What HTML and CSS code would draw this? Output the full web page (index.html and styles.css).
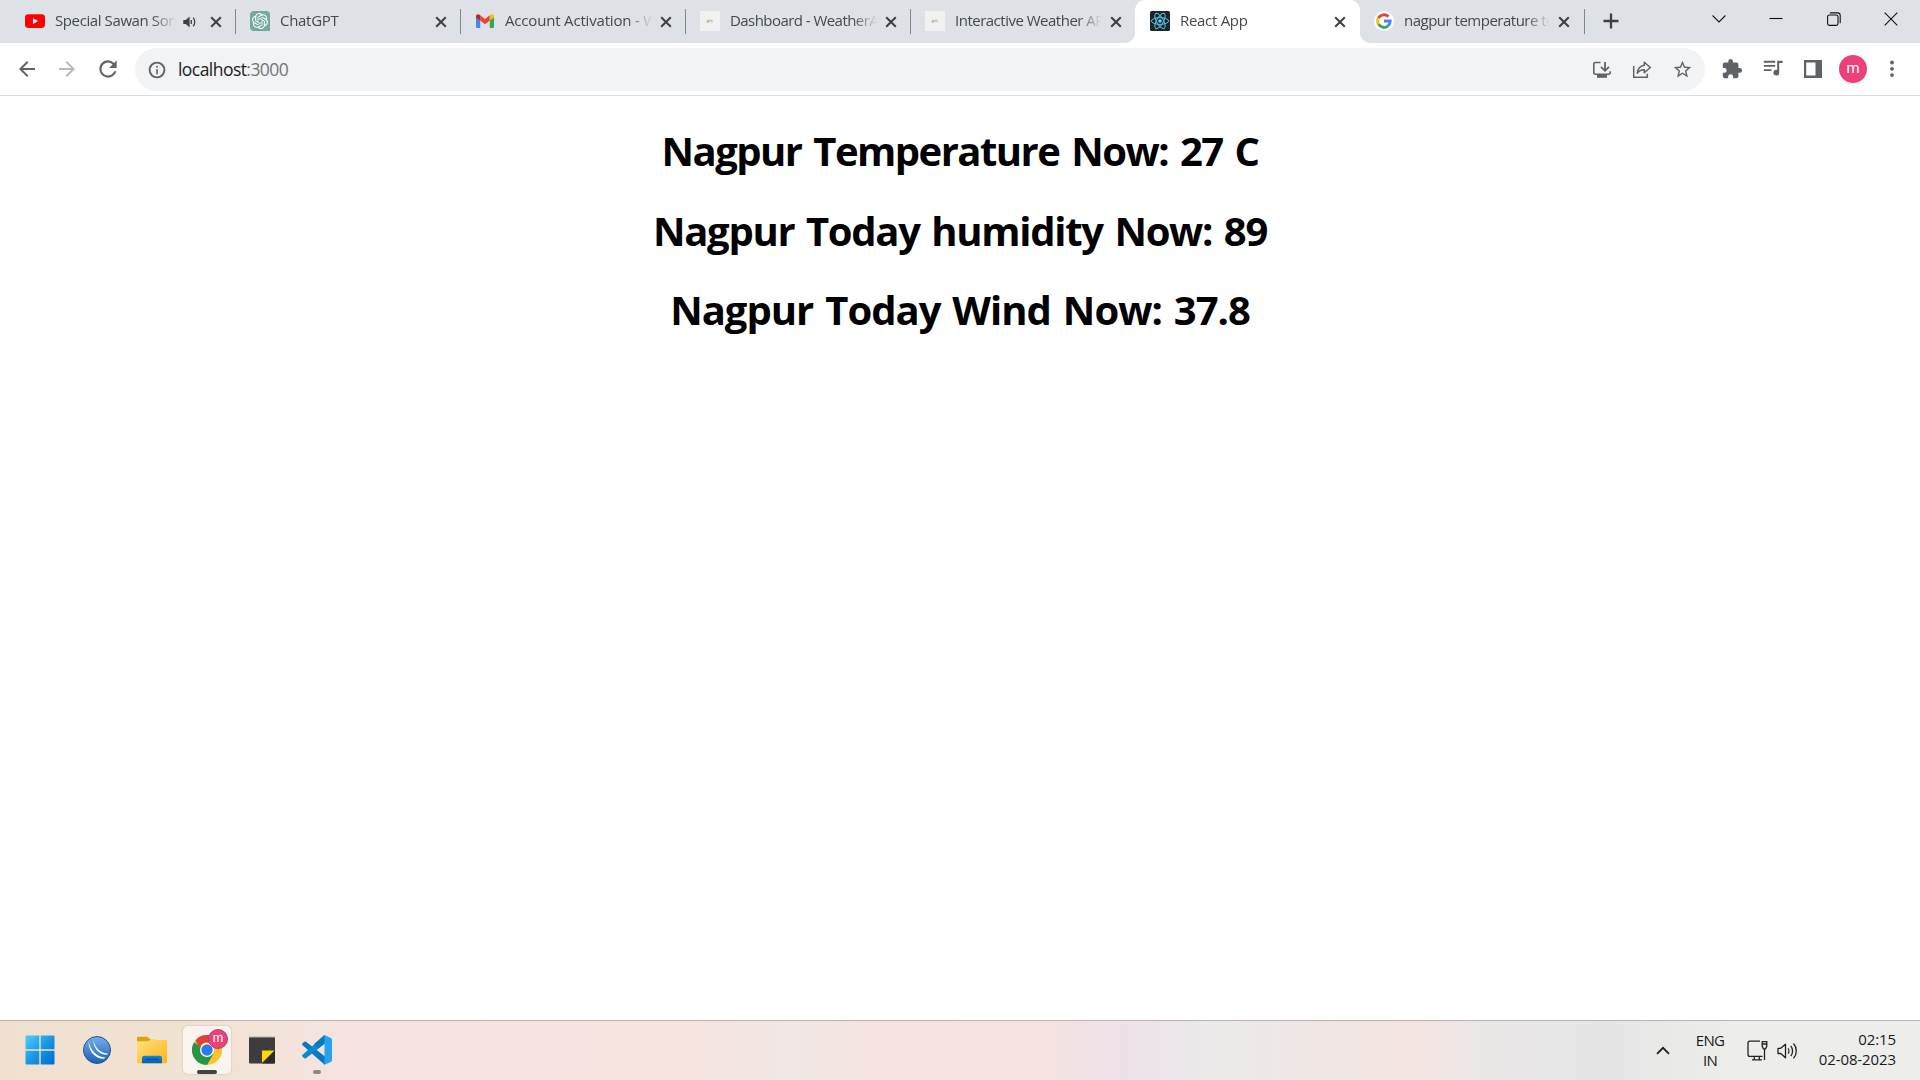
FILE: index.html
```html
<!DOCTYPE html>
<html lang="en">
<head>
<meta charset="utf-8">
<title>React App</title>
<link rel="stylesheet" href="styles.css">
</head>
<body>
<svg class="defs" width="0" height="0">
  <symbol id="close" viewBox="0 0 12 12"><path d="M1.2 1.2l9.6 9.6M10.8 1.2l-9.6 9.6" fill="none" stroke="#3c4043" stroke-width="2"/></symbol>
  <symbol id="weather" viewBox="0 0 20 20"><rect width="20" height="20" fill="#f1f1f0"/><circle cx="7.8" cy="10.6" r="1.2" fill="#a5c957"/><path d="M7 9.3h5.5" stroke="#b9b9a8" stroke-width="1"/><path d="M9.3 10.8h3.7" stroke="#c5c8d0" stroke-width="1"/></symbol>
</svg>

<header class="tabstrip">
  <div class="tab">
    <svg class="favicon" viewBox="0 0 20 20"><rect y="3.2" width="20" height="13.8" rx="3.4" fill="#f00"/><path d="M8 7.2v5.8l5-2.9z" fill="#fff"/></svg>
    <span class="title title-audio">Special Sawan Song</span>
    <svg class="audio" width="13" height="12" viewBox="0 0 13 12"><path d="M.3 4v4h2.5L6.6 11.6V.4L2.8 4z" fill="#3c4043"/><path d="M8.3 4v4" stroke="#3c4043" stroke-width="1.3"/><path d="M10 1.8c2 1.800 2 6.600 0 8.400" transform="translate(.2)" fill="none" stroke="#3c4043" stroke-width="1.300"/></svg>
    <svg class="close"><use href="#close"/></svg>
  </div>
  <div class="tab">
    <svg class="favicon" viewBox="0 0 20 20"><path d="M4 0h12a4 4 0 0 1 4 4v16H4a4 4 0 0 1-4-4V4a4 4 0 0 1 4-4z" fill="#74aa9c"/><g transform="translate(2 2) scale(.667)"><path fill="#fff" d="M22.28 9.82a5.98 5.98 0 0 0-.52-4.91 6.05 6.05 0 0 0-6.51-2.9A6.07 6.07 0 0 0 4.98 4.18a5.98 5.98 0 0 0-4 2.9 6.05 6.05 0 0 0 .74 7.1 5.98 5.98 0 0 0 .51 4.91 6.05 6.05 0 0 0 6.52 2.9A5.98 5.98 0 0 0 13.26 24a6.06 6.06 0 0 0 5.77-4.21 5.99 5.99 0 0 0 4-2.9 6.06 6.06 0 0 0-.75-7.07zm-9.02 12.61a4.48 4.48 0 0 1-2.88-1.04l.14-.08 4.78-2.76a.8.8 0 0 0 .39-.68v-6.74l2.02 1.17a.07.07 0 0 1 .04.05v5.58a4.5 4.5 0 0 1-4.49 4.5zM3.6 18.3a4.47 4.47 0 0 1-.54-3.01l.14.09 4.78 2.76a.77.77 0 0 0 .78 0l5.84-3.37v2.33a.08.08 0 0 1-.03.06L9.74 19.95a4.5 4.5 0 0 1-6.14-1.65zM2.34 7.9a4.49 4.49 0 0 1 2.37-1.98v5.68a.77.77 0 0 0 .39.68l5.81 3.35-2.02 1.17a.08.08 0 0 1-.07 0l-4.83-2.79A4.5 4.5 0 0 1 2.34 7.87zm16.6 3.86l-5.84-3.39L15.12 7.2a.08.08 0 0 1 .07 0l4.83 2.79a4.49 4.49 0 0 1-.68 8.1v-5.68a.79.79 0 0 0-.4-.66zm2.01-3.02l-.14-.09-4.77-2.78a.78.78 0 0 0-.79 0L9.41 9.23V6.9a.07.07 0 0 1 .03-.06l4.83-2.79a4.5 4.5 0 0 1 6.68 4.66zM8.31 12.86l-2.02-1.16a.08.08 0 0 1-.04-.06V6.07a4.5 4.5 0 0 1 7.38-3.45l-.14.08-4.78 2.76a.8.8 0 0 0-.39.68zm1.1-2.36l2.6-1.5 2.61 1.5v3l-2.6 1.5-2.61-1.5z"/></g></svg>
    <span class="title">ChatGPT</span>
    <svg class="close"><use href="#close"/></svg>
  </div>
  <div class="tab">
    <svg class="favicon" viewBox="0 0 20 20"><path d="M1 5v10.700A1.300 1.300 0 0 0 2.300 17H5.200V8.300z" fill="#4285f4"/><path d="M19 5v10.700a1.300 1.300 0 0 1-1.300 1.300H14.800V8.300z" fill="#34a853"/><path d="M5.200 4.300L10 8l4.800-3.700v5.200L10 13.200 5.200 9.500z" fill="#ea4335"/><path d="M1 5.300C1 3.400 3.200 2.600 4.600 3.800l.6.500v5.200L1 6.400z" fill="#c5221f"/><path d="M19 5.300c0-1.900-2.200-2.700-3.600-1.500l-.6.500v5.200L19 6.400z" fill="#fbbc04"/></svg>
    <span class="title title-wide">Account Activation - W</span>
    <svg class="close"><use href="#close"/></svg>
  </div>
  <div class="tab">
    <svg class="favicon"><use href="#weather"/></svg>
    <span class="title title-dash">Dashboard - WeatherA</span>
    <svg class="close"><use href="#close"/></svg>
  </div>
  <div class="tab tab-last">
    <svg class="favicon"><use href="#weather"/></svg>
    <span class="title title-tight">Interactive Weather AP</span>
    <svg class="close"><use href="#close"/></svg>
  </div>
  <div class="tab tab-active">
    <svg class="favicon" viewBox="0 0 20 20"><rect width="20" height="20" rx="1.500" fill="#20232a"/><g fill="none" stroke="#53c1de" stroke-width="1"><ellipse cx="10" cy="10" rx="8.600" ry="3.400"/><ellipse cx="10" cy="10" rx="8.600" ry="3.400" transform="rotate(60 10 10)"/><ellipse cx="10" cy="10" rx="8.600" ry="3.400" transform="rotate(120 10 10)"/></g><circle cx="10" cy="10" r="1.700" fill="#61dafb"/></svg>
    <span class="title">React App</span>
    <svg class="close"><use href="#close"/></svg>
  </div>
  <div class="tab tab-google">
    <svg class="favicon" viewBox="0 0 20 20"><circle cx="10" cy="10" r="10" fill="#fff"/><g fill="none" stroke-width="2.900"><path d="M4.500 6.900A6.300 6.300 0 0 1 14.400 5.600" stroke="#ea4335"/><path d="M4.500 13.100a6.300 6.300 0 0 1 0-6.200" stroke="#fbbc05"/><path d="M14.100 14.800a6.300 6.300 0 0 1-9.600-1.700" stroke="#34a853"/><path d="M10 10h6.200a6.300 6.300 0 0 1-2.100 4.800" stroke="#4285f4"/></g></svg>
    <span class="title title-tight">nagpur temperature to</span>
    <svg class="close"><use href="#close"/></svg>
  </div>
  <svg class="newtab" width="16" height="16" viewBox="0 0 16 16"><path d="M8 .5v15M.5 8h15" stroke="#3c4043" stroke-width="2.300"/></svg>
  <div class="winctl">
    <svg width="14" height="14" viewBox="0 0 14 14"><path d="M.6 3.500L7 10l6.400-6.500"/></svg>
    <svg width="14" height="14" viewBox="0 0 14 14"><path d="M.5 6.500h13"/></svg>
    <svg width="14" height="14" viewBox="0 0 14 14"><rect x=".6" y="3" width="10.400" height="10.400" rx="1.800"/><path d="M2.900.9h7.600a2.700 2.700 0 0 1 2.700 2.700v7.600"/></svg>
    <svg width="14" height="14" viewBox="0 0 14 14"><path d="M.7.700l12.600 12.600M13.300.7L.7 13.300"/></svg>
  </div>
</header>

<nav class="toolbar">
  <div class="navbtns">
    <svg width="24" height="24" viewBox="0 0 24 24"><path d="M20 11H7.830l5.590-5.590L12 4l-8 8 8 8 1.410-1.410L7.830 13H20z"/></svg>
    <svg class="disabled" width="24" height="24" viewBox="0 0 24 24"><path d="M4 11h12.170l-5.590-5.590L12 4l8 8-8 8-1.410-1.410L16.170 13H4z"/></svg>
    <svg width="26" height="26" viewBox="0 0 24 24"><path d="M17.650 6.350A7.960 7.960 0 0 0 12 4a8 8 0 1 0 7.730 10h-2.080A6 6 0 1 1 12 6c1.660 0 3.140.69 4.220 1.780L13 11h7V4z"/></svg>
  </div>
  <div class="omnibox">
    <svg width="20" height="20" viewBox="0 0 24 24"><path d="M11 7h2v2h-2zm0 4h2v6h-2zm1-9a10 10 0 1 0 0 20 10 10 0 0 0 0-20zm0 17.700a7.700 7.700 0 1 1 0-15.400 7.700 7.700 0 0 1 0 15.400z"/></svg>
    <span class="url">localhost<span class="port">:3000</span></span>
    <div class="omni-actions">
      <svg width="20" height="20" viewBox="0 0 20 20"><g fill="none" stroke="#5f6368" stroke-width="1.600"><path d="M8.500 2.500H3.300a1.500 1.500 0 0 0-1.500 1.500v8.700a1.500 1.500 0 0 0 1.500 1.500h13.400a1.500 1.500 0 0 0 1.500-1.500v-1.500"/><path d="M13 2v8.500M9 6.800l4 4 4-4" stroke-width="1.800"/></g><path d="M5 14h10v3.800H5z"/></svg>
      <svg width="20" height="20" viewBox="0 0 20 20"><g fill="none" stroke="#5f6368" stroke-width="1.500"><path d="M1.700 6v11.200h13.600v-3.400"/><path d="M12.300 2.300l6 5.200-6 5.300V9.800c-3 0-5.200.8-7 3.500.4-4.500 2.700-7.300 7-8z" stroke-linejoin="round"/></g></svg>
      <svg width="21" height="21" viewBox="0 0 24 24"><path d="M22 9.240l-7.190-.62L12 2 9.190 8.630 2 9.240l5.460 4.730L5.820 21 12 17.270 18.180 21l-1.630-7.030zM12 15.400l-3.760 2.270 1-4.280-3.320-2.880 4.380-.38L12 6.100l1.710 4.040 4.380.38-3.320 2.880 1 4.280z"/></svg>
    </div>
  </div>
  <div class="extras">
    <svg width="22" height="22" viewBox="0 0 24 24"><path d="M20.500 11H19V7a2 2 0 0 0-2-2h-4V3.500a2.500 2.500 0 0 0-5 0V5H4a2 2 0 0 0-2 2v3.800h1.500a2.700 2.700 0 0 1 0 5.400H2V20c0 1.100.9 2 2 2h3.800v-1.500a2.700 2.700 0 0 1 5.400 0V22H17a2 2 0 0 0 2-2v-4h1.500a2.500 2.500 0 0 0 0-5z"/></svg>
    <svg width="20" height="20" viewBox="0 0 20 20"><path d="M.8 2.700h11.400M.8 6.900h11.400M.8 11.100h7.700" fill="none" stroke="#5f6368" stroke-width="1.900"/><path d="M14.200 1.700h5.500v2.200h-3.500v9.700a2.900 2.900 0 1 1-2-2.700z"/></svg>
    <svg width="18" height="18" viewBox="0 0 18 18"><path fill-rule="evenodd" d="M0 0h18v18H0zM2.200 2.400v13.200h9.300V2.400z"/></svg>
    <span class="avatar">m</span>
    <svg width="18" height="18" viewBox="0 0 18 18"><circle cx="9" cy="2.500" r="1.900"/><circle cx="9" cy="8.800" r="1.900"/><circle cx="9" cy="15.100" r="1.900"/></svg>
  </div>
</nav>

<main class="page">
  <h1 class="temp">Nagpur Temperature Now: 27 C</h1>
  <h1 class="humid">Nagpur Today humidity Now: 89</h1>
  <h1 class="wind">Nagpur Today Wind Now: 37.8</h1>
</main>

<footer class="taskbar">
  <div class="apps">
    <div class="app app-start"><svg width="30" height="30" viewBox="0 0 30 30"><defs><linearGradient id="w" x1="0" y1="0" x2="30" y2="30" gradientUnits="userSpaceOnUse"><stop offset="0" stop-color="#4fd0fb"/><stop offset=".5" stop-color="#1a97e3"/><stop offset="1" stop-color="#0069cf"/></linearGradient></defs><path fill="url(#w)" d="M.5 1.500a1 1 0 0 1 1-1H14.300v13.800H.5zM15.700.5H28.500a1 1 0 0 1 1 1v12.800H15.700zM.5 15.700h13.800v13.800H1.500a1 1 0 0 1-1-1zM15.700 15.700h13.800v12.800a1 1 0 0 1-1 1H15.700z"/></svg></div>
    <div class="app app-wide"><svg width="30" height="30" viewBox="0 0 30 30"><defs><linearGradient id="b" x1="0" y1="0" x2="0" y2="1"><stop offset="0" stop-color="#74b0ee"/><stop offset="1" stop-color="#1960b5"/></linearGradient></defs><circle cx="15" cy="15" r="13.500" fill="url(#b)" stroke="#34517c" stroke-width="1"/><g fill="#fff"><path d="M6.500 6.500c.1 9.500 6.500 17.300 15.300 17.300l1.700-1.400C14.400 21.700 8.600 15.500 6.500 6.500z"/><path d="M11.300 5.500c.2 7.600 5.300 14.300 13.800 14.300l.8-1.300C18.500 18 13.600 13.600 11.300 5.500z"/></g></svg></div>
    <div class="app"><svg width="30" height="28" viewBox="0 0 30 28"><defs><linearGradient id="f" x1="0" y1="0" x2="1" y2="1"><stop offset="0" stop-color="#ffe07c"/><stop offset="1" stop-color="#fcb61a"/></linearGradient><linearGradient id="fb" x1="0" y1="0" x2="0" y2="1"><stop offset="0" stop-color="#1086dc"/><stop offset="1" stop-color="#0860b0"/></linearGradient></defs><path d="M0 2a1.200 1.200 0 0 1 1.200-1.200h8.300a3 3 0 0 1 1.800.7L13.500 3.800H18V8H0z" fill="#dfa20b"/><path d="M0 5.300h10.200a3 3 0 0 0 1.600-.5l1.300-.8H29a1 1 0 0 1 1 1v21a1.200 1.200 0 0 1-1.200 1.200H1.200A1.200 1.200 0 0 1 0 26z" fill="url(#f)"/><path d="M5 27.200V22a2.300 2.300 0 0 1 2.300-2.300h15.400A2.300 2.300 0 0 1 25 22v5.200z" fill="url(#fb)"/><path d="M8.500 23.300h13" stroke="#064a89" stroke-width="1.100"/></svg></div>
    <div class="app app-open">
      <svg width="30" height="30" viewBox="0 0 30 30"><circle cx="15" cy="15" r="15" fill="#fbc42c"/><path d="M2 7.500a15 15 0 0 0 13 22.500l6.500-11.300L15 15z" fill="#269646"/><path d="M2 7.500A15 15 0 0 1 28 7.500H15a7.500 7.500 0 0 0-7.300 5.800L3.500 5.500z" fill="#df4236"/><circle cx="15" cy="15" r="7" fill="#fff"/><circle cx="15" cy="15" r="5.700" fill="#2b79ea"/></svg>
      <span class="badge">m</span>
      <span class="mark"></span>
    </div>
    <div class="app"><svg width="26" height="28" viewBox="0 0 26 28"><rect y="1" width="26" height="26.500" rx="1" fill="#3d3d3d"/><path d="M0 1h26" stroke="#b8b0a8" stroke-width="1"/><path d="M13 27V14.500h12.500z" fill="#ffd800"/><path d="M13 27.500L26 14.500v12a1 1 0 0 1-1 1z" fill="#2b2b2b"/></svg></div>
    <div class="app"><svg width="30" height="30" viewBox="0 0 30 30"><path d="M.6 10.200a1.300 1.300 0 0 1 0-1.900L2.300 6.800a1.300 1.300 0 0 1 1.700 0L23 21.500V29.500a2 2 0 0 1-1.200-.5z" fill="#0879be"/><path d="M.6 19.800a1.300 1.300 0 0 0 0 1.900l1.700 1.500a1.300 1.300 0 0 0 1.700 0L23 8.500V.500a2 2 0 0 0-1.200.500z" fill="#0b8ad2"/><path d="M21.800.4L12 9.300l4.500 3.700L22.800 8.300V.200z" fill="#0879be"/><path d="M21.800 29.600a2 2 0 0 1-.8-.2c.9.800 1.500.2 1.500-1V1.600c0-1.200-.6-1.800-1.500-1a2 2 0 0 1 1.900-.3l5.900 2.800A2 2 0 0 1 30 4.800v20.400a2 2 0 0 1-1.200 1.700l-5.900 2.700a2 2 0 0 1-1.100 0z" fill="#25a3ee"/></svg><span class="mark mark-dot"></span></div>
  </div>
  <div class="tray">
    <svg class="up" width="14" height="9" viewBox="0 0 14 9"><path d="M1 7.800l6-6 6 6" fill="none" stroke="#1b1b1b" stroke-width="1.700"/></svg>
    <div class="lang"><span>ENG</span><span>IN</span></div>
    <svg class="net" width="21" height="21" viewBox="0 0 21 21"><g fill="none" stroke="#222" stroke-width="1.300"><path d="M13 1.200H2.900A1.900 1.900 0 0 0 1 3.100v11.300a1.900 1.900 0 0 0 1.900 1.900h12.600M7.300 16.500v3M12.300 16.500v3M5 19.800h10"/><path d="M15.200 1.700h4.600v4.600l-1.200 2.500h-2.200l-1.200-2.500zM15.200 4h4.600M17.500 8.800v11.200"/></g></svg>
    <svg class="vol" width="21" height="18" viewBox="0 0 21 18"><g fill="none" stroke="#222" stroke-width="1.300" stroke-linejoin="round"><path d="M1 6.300v5.200h2.700l4.800 4.200V2.200L3.700 6.300z"/><path d="M11 6.300c1.200 1.400 1.200 3.900 0 5.300M13.700 3.900c2.500 2.700 2.500 7.400 0 10.100M16.500 1.500c3.700 4 3.700 10.800 0 14.800"/></g></svg>
    <div class="clock"><span>02:15</span><span>02-08-2023</span></div>
  </div>
</footer>
</body>
</html>
```
FILE: styles.css
```css
* { box-sizing: border-box; }
body {
  margin: 0;
  height: 1080px;
  display: flex;
  flex-direction: column;
  overflow: hidden;
  background: #fff;
  font-family: "Open Sans", "Noto Sans", sans-serif;
}
svg { flex: none; display: block; }
.defs { position: absolute; }

/* Tab strip */
.tabstrip {
  flex: none;
  display: flex;
  height: 43px;
  padding-left: 10px;
  background: #dee1e6;
}
.tab {
  position: relative;
  flex: none;
  width: 225px;
  height: 43px;
  padding: 0 13.5px 0 15px;
  display: flex;
  align-items: center;
}
.tab::after {
  content: "";
  position: absolute;
  right: -1px;
  top: 9px;
  width: 1px;
  height: 25px;
  background: #80868b;
}
.tab-last::after, .tab-active::after { display: none; }
.tab-active {
  background: #fff;
  border-radius: 10px 10px 0 0;
  padding-right: 14.5px;
}
.tab-active::before {
  content: "";
  position: absolute;
  left: -10px;
  right: -10px;
  bottom: 0;
  height: 10px;
  background:
    radial-gradient(circle at 0 0, transparent 9.5px, #fff 10.2px) left / 10px 10px no-repeat,
    radial-gradient(circle at 100% 0, transparent 9.5px, #fff 10.2px) right / 10px 10px no-repeat;
}
.tab-google { width: 224px; padding: 0 14.5px 0 14px; }
.favicon { width: 20px; height: 20px; margin-top: -1px; }
.title {
  flex: 1;
  min-width: 0;
  margin: -3px 8px 0 10px;
  overflow: hidden;
  white-space: nowrap;
  font-size: 15px;
  line-height: 22px;
  letter-spacing: -0.3px;
  color: #45494d;
  -webkit-mask-image: linear-gradient(to right, #000 calc(100% - 24px), transparent);
  mask-image: linear-gradient(to right, #000 calc(100% - 24px), transparent);
}
.title-wide { letter-spacing: -0.18px; }
.title-dash { letter-spacing: -0.55px; }
.title-tight { letter-spacing: -0.5px; }
.title-audio { margin-right: 7px; letter-spacing: -0.4px; }
.audio { margin-right: 14px; }
.close { width: 12px; height: 12px; }
.newtab { align-self: center; margin: -1px 0 0 19px; }
.winctl {
  margin-left: auto;
  padding: 12px 22px 0 0;
  display: flex;
  gap: 43.5px;
}
.winctl path, .winctl rect { fill: none; stroke: #111; stroke-width: 1.1; }

/* Toolbar */
.toolbar {
  flex: none;
  display: flex;
  align-items: center;
  height: 53px;
  border-bottom: 1px solid #dadce0;
  fill: #5f6368;
}
.navbtns {
  display: flex;
  align-items: center;
  width: 135px;
  gap: 16px;
  padding-left: 15px;
}
.navbtns .disabled { fill: #babcbe; }
.omnibox {
  display: flex;
  align-items: center;
  width: 1570px;
  height: 43px;
  margin-top: 1px;
  padding: 0 12px;
  border-radius: 22px;
  background: #f1f3f4;
}
.url {
  margin: -1px 0 0 11px;
  font-size: 17.5px;
  line-height: 24px;
  letter-spacing: -0.55px;
  color: #202124;
}
.port { color: #70757a; }
.omni-actions {
  display: flex;
  align-items: center;
  gap: 20px;
  margin-left: auto;
}
.extras {
  display: flex;
  align-items: center;
  gap: 21px;
  margin-left: 16px;
}
.extras svg:nth-child(2) { margin-left: -1px; }
.avatar, .badge {
  display: flex;
  align-items: center;
  justify-content: center;
  border-radius: 50%;
  background: #ec407a;
  color: #fff;
  font-family: Roboto, sans-serif;
}
.avatar {
  width: 28px;
  height: 28px;
  padding-bottom: 2px;
  margin: 0 -5px 0 -4px;
  font-size: 15px;
}
.extras .avatar + svg { margin-left: 0; }

/* Page */
.page {
  flex: 1;
  display: flex;
  flex-direction: column;
  align-items: center;
  gap: 26.5px;
  padding-top: 28px;
  color: #000;
}
.page h1 {
  margin: 0;
  font-size: 40px;
  font-weight: 700;
  line-height: 53px;
  white-space: nowrap;
}
.page .temp { letter-spacing: -1.52px; word-spacing: 3px; }
.page .humid { letter-spacing: -1.28px; word-spacing: 2.5px; }
.page .wind { letter-spacing: -0.98px; word-spacing: 2.5px; }

/* Taskbar */
.taskbar {
  flex: none;
  display: flex;
  justify-content: space-between;
  height: 60px;
  border-top: 1px solid #b9b2b0;
  background: linear-gradient(to right,
    #f0e0d0 0, #f1e3d2 210px, #f5e3e1 340px, #f5e3e0 700px, #f1e7e4 790px,
    #f5e3e1 880px, #f4e2e1 1060px, #ede1ea 1130px, #ebeae9 1210px,
    #f1e5e2 1360px, #f4e3e1 1420px, #e9e7e6 1475px, #e6e5e6 1610px,
    #edeeea 1740px, #ededeb 1920px);
}
.apps { display: flex; padding-left: 16px; }
.app {
  position: relative;
  display: flex;
  align-items: center;
  justify-content: center;
  width: 48px;
  height: 48px;
  margin: 5px 7px 0 0;
}
.app-wide { margin-left: 2px; }
.app-open {
  border-radius: 5px;
  background: #f9f4ee;
  box-shadow: 0 0 1px 1px rgba(120, 100, 80, 0.12);
}
.badge {
  position: absolute;
  left: 25px;
  top: 3px;
  width: 20px;
  height: 20px;
  padding-bottom: 2px;
  border: 1px solid #b5406a;
  font-size: 12px;
}
.mark {
  position: absolute;
  bottom: 0;
  left: 14px;
  width: 20px;
  height: 4px;
  border-radius: 2px;
  background: #444240;
}
.mark-dot { left: 20px; width: 8px; background: #8d8583; }
.tray {
  display: flex;
  align-items: center;
  padding-right: 24px;
  color: #1b1b1b;
  font-size: 15px;
  line-height: 20px;
}
.up { margin: -1px 19px 0 0; }
.lang, .clock { display: flex; flex-direction: column; }
.lang { align-items: center; width: 42px; margin: -2px 16px 0 0; letter-spacing: -0.7px; }
.net { margin-right: 9px; }
.clock { align-items: flex-end; width: 98px; letter-spacing: -0.1px; margin-top: -3px; }
```
